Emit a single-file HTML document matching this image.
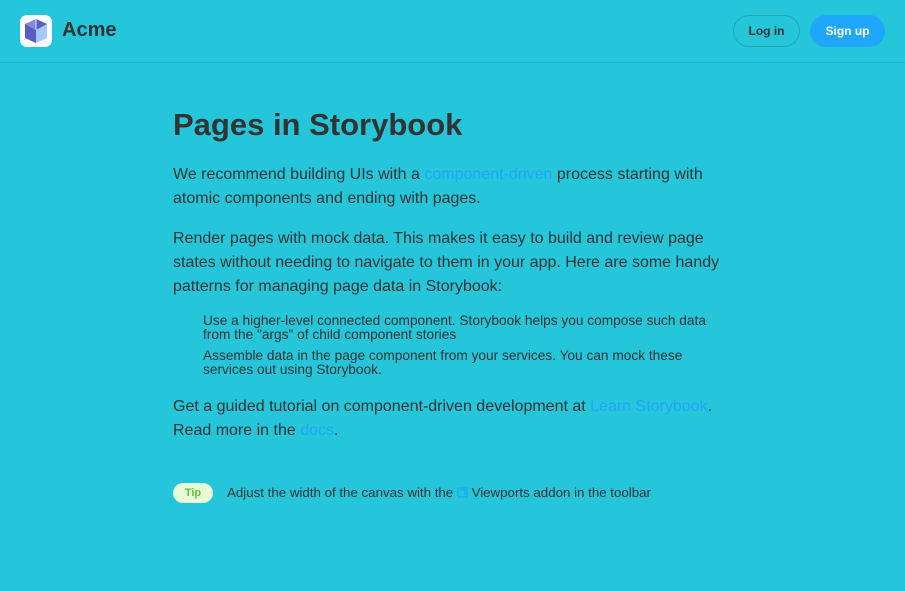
<!DOCTYPE html>
<html><head><meta charset="utf-8"><style>
*{box-sizing:border-box;margin:0;padding:0}
body{width:905px;height:591px;background:#25c5da;font-family:"Liberation Sans",sans-serif;color:#333;overflow:hidden;position:relative}
header{height:63px;border-bottom:1px solid rgba(0,0,0,0.1);position:relative}
.logo{position:absolute;left:20px;top:15px;width:32px;height:32px;background:#fff;border-radius:7px}
.brand{position:absolute;left:62px;top:19px;font-weight:bold;font-size:20px;color:#333}
.btn{position:absolute;top:15px;height:32px;border-radius:16px;font-size:12px;font-weight:bold;line-height:32px;text-align:center}
.login{left:733px;width:67px;border:1px solid rgba(0,0,0,0.15);color:#333;line-height:30px}
.signup{left:810px;width:75px;background:#1ea7fd;color:#fff}
h2{position:absolute;left:173px;top:107px;font-size:31px;font-weight:bold;color:#333}
p{position:absolute;left:173px;width:560px;font-size:16px;line-height:24px;color:#333}
a{color:#1ea7fd;text-decoration:none}
ul{position:absolute;left:203px;width:527px;list-style:none;font-size:13.7px;line-height:14px;color:#333}
ul li{margin-bottom:7px}
.tip{position:absolute;left:173px;top:483px;width:40px;height:20px;border-radius:10px;background:#e7fdd8;color:#66bf3c;font-size:11px;font-weight:bold;text-align:center;line-height:20px}
.tiptext{position:absolute;left:227px;top:485px;font-size:13.3px;color:#333}
</style></head><body>
<header>
<div class="logo"><svg width="32" height="32" viewBox="0 0 32 32"><path d="M5 9 L16 4 L27 9 L27 23 L16 28 L5 23Z" fill="#a5c8ff"/><path d="M5 9 L16 15 L16 28 L5 23Z" fill="#5a5dbf"/><path d="M16 4 L27 9 L16 15Z" fill="#5a5dbf"/><path d="M16 4 L5 9 L16 15Z" fill="#7d8ce0"/><path d="M16 4 L16 15" stroke="#fff" stroke-width="0.8"/></svg></div>
<div class="brand">Acme</div>
<div class="btn login">Log in</div>
<div class="btn signup">Sign up</div>
</header>
<h2>Pages in Storybook</h2>
<p style="top:163px">We recommend building UIs with a <a>component-driven</a> process starting with atomic components and ending with pages.</p>
<p style="top:227px">Render pages with mock data. This makes it easy to build and review page states without needing to navigate to them in your app. Here are some handy patterns for managing page data in Storybook:</p>
<ul style="top:314px">
<li>Use a higher-level connected component. Storybook helps you compose such data from the "args" of child component stories</li>
<li>Assemble data in the page component from your services. You can mock these services out using Storybook.</li>
</ul>
<p style="top:395px">Get a guided tutorial on component-driven development at <a>Learn Storybook</a>. Read more in the <a>docs</a>.</p>
<div class="tip">Tip</div>
<div class="tiptext">Adjust the width of the canvas with the <svg width="11" height="11" viewBox="0 0 11 11" style="vertical-align:-1px"><path d="M1 1H10V10H1Z M3 3H8V8" fill="none" stroke="#1ea7fd" stroke-width="1.2"/></svg> Viewports addon in the toolbar</div>
</body></html>
